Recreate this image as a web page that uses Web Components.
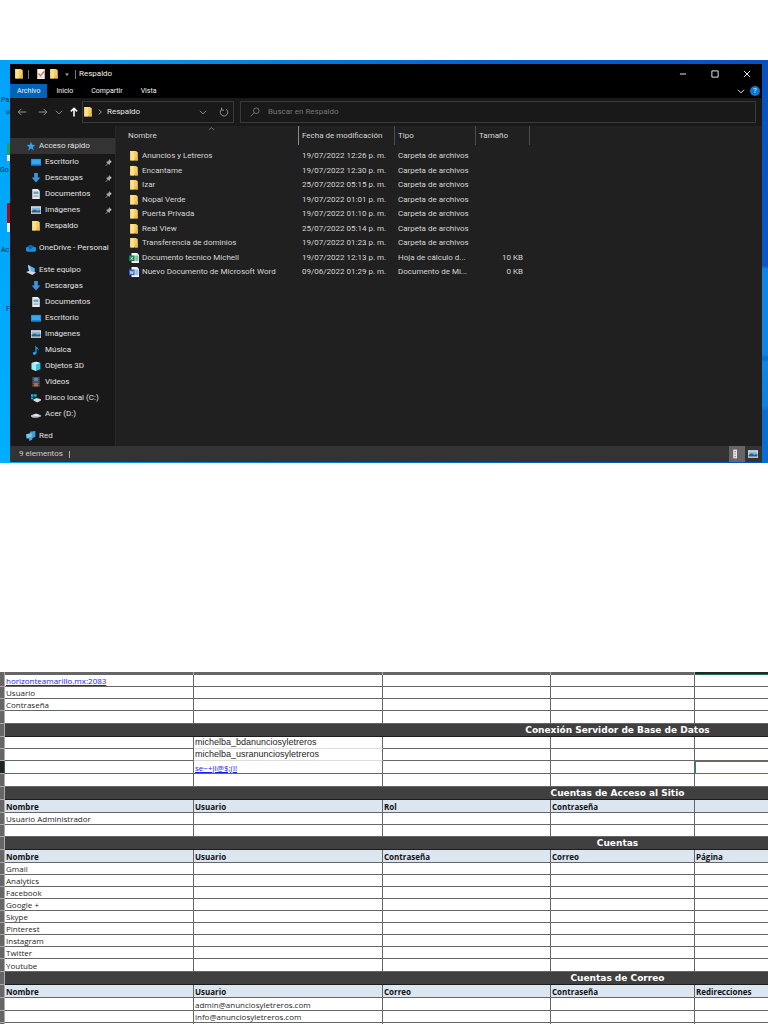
<!DOCTYPE html>
<html lang="es">
<head>
<meta charset="utf-8">
<title>Respaldo</title>
<style>
  html { height: 100%; }
  body { margin: 0; height: 100%; background: #fff; display: flex; flex-direction: column; overflow: hidden;
    font-family: Roboto, "Open Sans", sans-serif; font-size: 8px; line-height: 16px; }
  desk-scene { margin-top: 60px; }
  work-sheet { margin-top: 209px; }
</style>
</head>
<body>
<desk-scene>
  <file-explorer></file-explorer>
</desk-scene>
<work-sheet></work-sheet>

<script>
const ICONS = {
  folder: '<path d="M2 0h9l3 2v13H2z" fill="#f6cf63"/><path d="M2 0h6v15H2z" fill="#ffe08a"/><path d="M10 10h4v5h-4z" fill="#e9b84a"/>',
  check: '<path d="M2 0h12v16H2z" fill="#f4f4f4"/><path d="M4 7l3 4 6-7" fill="none" stroke="#e0653a" stroke-width="2"/><path d="M4 13h8" stroke="#aab" />',
  star: '<path d="M8 1l2 5 5 .5-4 3.300 1.500 5.200L8 12l-4.500 3L5 9.800 1 6.500 6 6z" fill="#2ea1f2"/>',
  desktop: '<path d="M0 3h16v11H0z" fill="#1187dd"/><path d="M1 4h14v8l-3-1H1z" fill="#35a9f5"/>',
  down: '<path d="M5 0h6v7h4l-7 8-7-8h4z" fill="#3b93e0"/>',
  doc: '<path d="M2 0h9l3 3v13H2z" fill="#e8edf2"/><path d="M4 4h8v4H4z" fill="#6f9fc4"/><path d="M4 10h8M4 12h8" stroke="#7f94a8"/>',
  image: '<path d="M0 2h16v12H0z" fill="#e9f1f7"/><path d="M1 4h14v8H1z" fill="#7fb4dd"/><path d="M1 12V9l5-2 4 2 5-1v4z" fill="#2f5f73"/>',
  cloud: '<path d="M4 14a4 4 0 0 1-1-8 5.500 5.500 0 0 1 9 0 4 4 0 0 1 1 8z" fill="#1490df"/><path d="M3 6a5.500 5.500 0 0 1 9 0L6 11z" fill="#0a64b5"/>',
  pc: '<path d="M3 0l11 5v7L5 9z" fill="#56b4e8"/><path d="M3 0l3 1 2 9-3-1z" fill="#9fd6f5"/><path d="M0 11l6-2 10 3-6 4z" fill="#d5dde3"/>',
  music: '<path d="M7 0c1 4 6 4 5 9-1-3-3-3-3-3v6c0 5-7 5-6 1 .3-2 3-2.500 4-2z" fill="#1e9bf0"/>',
  cube: '<path d="M1 3l7-2 7 2v10l-7 3-7-3z" fill="#35c3e6"/><path d="M1 3l7 2v11l-7-3z" fill="#a6ecf7"/><path d="M1 3l7-2 7 2-7 2z" fill="#d8f8fc"/>',
  video: '<path d="M2 0h12v16H2z" fill="#3a3d44"/><path d="M5 1h6v6H5z" fill="#5a86c9"/><path d="M5 9h6v6H5z" fill="#b0714e"/><path d="M3.500 1v14M12.500 1v14" stroke="#c8c8c8" stroke-dasharray="1 2"/>',
  diskc: '<path d="M0 2h4v4H0zM5 2h4v4H5zM0 7h4v3H0z" fill="#1eb2ee"/><path d="M4 10l5-2 7 2v2l-6 3-6-3z" fill="#d5dade"/>',
  disk: '<path d="M0 10l8-3 8 3v2l-6 2H3l-3-2z" fill="#b9bcc0"/><path d="M2 10l6-2 6 2-5 1z" fill="#f4f4f4"/>',
  network: '<path d="M6 1l9-1v9l-6 3z" fill="#3f9fdd"/><path d="M0 5l9-2v8l-8 1z" fill="#7cc4ee"/><path d="M5 10l5-1v5l-5 2z" fill="#4fa3d8"/>',
  excel: '<path d="M4 0h9l3 3v13H4z" fill="#f1f4f2"/><path d="M10 4h5v9h-5z" fill="#7cc09a"/><path d="M0 4h9v9H0z" fill="#15814a"/><path d="M2.500 6l4 5M6.500 6l-4 5" stroke="#fff"/>',
  word: '<path d="M4 0h9l3 3v13H4z" fill="#f1f4fa"/><path d="M10 4h5v9h-5z" fill="#9cb9e8"/><path d="M0 4h9v9H0z" fill="#2b62c4"/><path d="M2 6l1 5 1.500-4L6 11l1-5" fill="none" stroke="#fff"/>',
  pin: '<path d="M9 0l7 7-2 .5-3 2.500-.5 4-3.500-3L2 16l-1-1 5-5-4-4 5-.5L9 3z" fill="#a5b1bb"/>',
  back: '<path d="M15 8H2M7 3L2 8l5 5" class="s"/>',
  forward: '<path d="M1 8h13M9 3l5 5-5 5" class="s"/>',
  up: '<path d="M8 15V2M3 7l5-5 5 5" class="s bold"/>',
  chevron: '<path d="M3 6l5 5 5-5" class="s"/>',
  caret: '<path d="M2 11l6-5 6 5" class="s"/>',
  right: '<path d="M6 4l4 4-4 4" class="s"/>',
  small: '<path d="M5 7h6l-3 4z" fill="currentColor"/>',
  refresh: '<path d="M11.500 3.500A6 6 0 1 1 4 4M4 1v4h4" class="s"/>',
  search: '<circle cx="10" cy="6" r="4.500" class="s"/><path d="M7 9l-6 6" class="s"/>',
  min: '<path d="M3 8h10" class="s"/>',
  max: '<path d="M3 3h10v10H3z" class="s"/>',
  close: '<path d="M3 3l10 10M13 3L3 13" class="s"/>',
  details: '<path d="M2 1h6v14H2z" fill="#e8e8e8"/><path d="M4 3h2v2H4zM4 11h2v2H4z" fill="#b5655a"/><path d="M4 7h2v2H4z" fill="#7a8a94"/>'
};

class UiIcon extends HTMLElement {
  connectedCallback() {
    const root = this.attachShadow({ mode: 'open' });
    root.innerHTML = `<style>
      :host { display: block; width: 10px; height: 10px; flex: none; }
      svg { display: block; width: 100%; height: 100%; }
      .s { fill: none; stroke: currentColor; stroke-width: 1.5px; }
      .bold { stroke-width: 2.5px; }
    </style><svg viewBox="0 0 16 16" aria-hidden="true">${ICONS[this.getAttribute('name')]}</svg>`;
  }
}
customElements.define('ui-icon', UiIcon);

class DeskScene extends HTMLElement {
  constructor() {
    super();
    this.attachShadow({ mode: 'open' }).innerHTML = `<style>
      :host { display: grid; position: relative; padding: 4px 6px 1px 10px; overflow: hidden;
        background:
          linear-gradient(#0850bd, #0a58c6 51%, #0e84e6 52%, #0e84e6 73%, #0a6cd2 74%, #0e86e2 75%, #0c80dc 86%, #0a6ed0 87%) right / 6px 100% no-repeat,
          linear-gradient(90deg, #00a8fb, #0a8ae0 25%, #0066cc 60%, #0850bd); }
      .shortcuts { position: absolute; left: 0; top: 0; width: 10px; height: 100%;
        background: linear-gradient(#00a3f8, #00aeff); color: #042d48; font-size: 7px; line-height: 12px; }
      .shortcuts span, .shortcuts i { position: absolute; }
      .shortcuts i { right: 0; width: 3px; }
    </style>
    <div class="shortcuts">
      <span style="left:1px;top:34px">Pa</span><span style="left:6px;top:46px">u</span>
      <i style="top:83px;height:12px;background:#2b9d52"></i><i style="top:95px;height:6px;background:#e6eef2"></i>
      <span style="left:0;top:104px">Go</span>
      <i style="top:143px;height:20px;background:#a80c14"></i><i style="top:163px;height:9px;background:#e6eef2"></i>
      <span style="left:1px;top:184px">Ac</span><span style="left:6px;top:243px">F</span>
    </div>
    <slot></slot>`;
  }
}
customElements.define('desk-scene', DeskScene);

class NavItem extends HTMLElement {
  connectedCallback() {
    const pin = this.hasAttribute('pinned') ? '<ui-icon name="pin"></ui-icon>' : '';
    this.attachShadow({ mode: 'open' }).innerHTML = `<style>
      :host { display: block; }
      a { display: flex; align-items: center; gap: 3px; height: 16px; padding: 0 3px 0 16px; color: #e2e2e2; text-decoration: none; white-space: nowrap; }
      :host([sub]) a { padding-left: 21px; gap: 4px; }
      :host([current]) a { background: #333; }
      span { flex: 1; }
      ui-icon[name=pin] { width: 7px; height: 7px; }
    </style><a href="#"><ui-icon name="${this.getAttribute('icon')}"></ui-icon><span><slot></slot></span>${pin}</a>`;
  }
}
customElements.define('nav-item', NavItem);

class TitleBar extends HTMLElement {
  constructor() {
    super();
    this.attachShadow({ mode: 'open' }).innerHTML = `<style>
      :host { display: block; background: #000; color: #f2f2f2; }
      button { border: 0; background: none; color: inherit; font: inherit; padding: 0; margin: 0; }
      .row { display: flex; align-items: center; }
      .title { height: 20px; padding-left: 4px; }
      .sep { width: 1px; height: 9px; background: #777; }
      .quick { display: flex; align-items: center; flex: 1; gap: 3px; }
      .quick .sep { margin: 0 4px 0 1px; }
      .quick ui-icon[name=small] { color: #aaa; }
      .quick .last { margin: 0; }
      .ctl { width: 32px; height: 20px; display: grid; place-items: center; }
      .ctl:last-child { width: 31px; }
      .tabs { height: 14px; font-size: 7px; line-height: 14px; }
      .tabs button { padding: 0 9px; height: 14px; }
      .tabs .file { background: #0063b8; padding: 0 7px; }
      .fill { flex: 1; }
      .tabs .tool { padding: 0 4px 0 0; }
      .tabs .help { width: 10px; height: 10px; border-radius: 50%; background: #0a78d4; padding: 0; margin-right: 2px; line-height: 10px; font-size: 8px; }
    </style>
    <div class="row title">
      <div class="quick"><ui-icon name="folder"></ui-icon><div class="sep"></div><ui-icon name="check"></ui-icon><ui-icon name="folder"></ui-icon><ui-icon name="small"></ui-icon><div class="sep last"></div><span>Respaldo</span></div>
      <button class="ctl" aria-label="Minimizar"><ui-icon name="min"></ui-icon></button>
      <button class="ctl" aria-label="Maximizar"><ui-icon name="max"></ui-icon></button>
      <button class="ctl" aria-label="Cerrar"><ui-icon name="close"></ui-icon></button>
    </div>
    <div class="row tabs">
      <button class="file">Archivo</button><button>Inicio</button><button>Compartir</button><button>Vista</button>
      <div class="fill"></div>
      <button class="tool" aria-label="Expandir cinta"><ui-icon name="chevron"></ui-icon></button>
      <button class="help">?</button>
    </div>`;
  }
}
customElements.define('title-bar', TitleBar);

class AddressBar extends HTMLElement {
  constructor() {
    super();
    this.attachShadow({ mode: 'open' }).innerHTML = `<style>
      :host { display: flex; align-items: center; height: 28px; background: #191919; color: #e6e6e6; padding: 0 6px 0 7px; box-sizing: border-box; }
      button { border: 0; background: none; color: #999; padding: 0; margin: 0; }
      .nav { display: flex; align-items: center; gap: 11px; width: 65px; box-sizing: border-box; }
      .nav button:nth-child(3) { margin: 0 -6px 0 -5px; }
      .nav button:nth-child(4) { color: #fff; }
      .box { box-sizing: border-box; height: 22px; border: 1px solid #3a3a3a; display: flex; align-items: center; }
      .path { width: 152px; padding: 0 4px 0 0; gap: 2px; }
      .path span { flex: 1; }
      .path button { margin-left: 9px; }
      .path ui-icon[name=right] { color: #aaa; }
      .search { flex: 1; margin-left: 6px; padding-left: 9px; gap: 8px; color: #777; }
      input { flex: 1; min-width: 0; border: 0; padding: 0; background: none; font: inherit; color: inherit; outline: 0; }
      input::placeholder { color: #777; opacity: 1; }
    </style>
    <div class="nav">
      <button aria-label="Atrás"><ui-icon name="back"></ui-icon></button>
      <button aria-label="Adelante"><ui-icon name="forward"></ui-icon></button>
      <button aria-label="Recientes"><ui-icon name="chevron"></ui-icon></button>
      <button aria-label="Subir"><ui-icon name="up"></ui-icon></button>
    </div>
    <div class="box path"><ui-icon name="folder"></ui-icon><ui-icon name="right"></ui-icon><span>Respaldo</span>
      <button aria-label="Historial"><ui-icon name="chevron"></ui-icon></button>
      <button aria-label="Actualizar"><ui-icon name="refresh"></ui-icon></button></div>
    <label class="box search"><ui-icon name="search"></ui-icon><input type="text" aria-label="Buscar en Respaldo" placeholder="Buscar en Respaldo"></label>`;
  }
}
customElements.define('address-bar', AddressBar);

const FILES = [
  ['folder', 'Anuncios y Letreros', '19/07/2022 12:26 p. m.', 'Carpeta de archivos', ''],
  ['folder', 'Encantame', '19/07/2022 12:30 p. m.', 'Carpeta de archivos', ''],
  ['folder', 'Izar', '25/07/2022 05:15 p. m.', 'Carpeta de archivos', ''],
  ['folder', 'Nopal Verde', '19/07/2022 01:01 p. m.', 'Carpeta de archivos', ''],
  ['folder', 'Puerta Privada', '19/07/2022 01:10 p. m.', 'Carpeta de archivos', ''],
  ['folder', 'Real View', '25/07/2022 05:14 p. m.', 'Carpeta de archivos', ''],
  ['folder', 'Transferencia de dominios', '19/07/2022 01:23 p. m.', 'Carpeta de archivos', ''],
  ['excel', 'Documento tecnico Michell', '19/07/2022 12:13 p. m.', 'Hoja de cálculo d...', '10 KB'],
  ['word', 'Nuevo Documento de Microsoft Word', '09/06/2022 01:29 p. m.', 'Documento de Mi...', '0 KB']
];

class FileList extends HTMLElement {
  constructor() {
    super();
    this.attachShadow({ mode: 'open' }).innerHTML = `<style>
      :host { display: block; background: #202020; color: #d6d6d6; border-left: 1px solid #292929; position: relative; }
      table { border-collapse: separate; border-spacing: 0; table-layout: fixed; width: 100%; }
      th { height: 19px; padding: 0 0 0 3px; text-align: left; font-weight: normal; border-right: 1px solid #4c4c4c; line-height: 16px; }
      th:first-child { padding-left: 12px; border-color: #8a8a8a; }
      th:last-child { border: 0; }
      thead::after { content: ""; display: block; height: 4px; }
      td { height: 14px; padding: 0 0 0 3px; line-height: 14px; white-space: nowrap; }
      td:first-child { padding: 0; }
      tr:nth-child(even) td { height: 15px; }
      td:nth-child(4) { text-align: right; padding-right: 7px; }
      .name { display: flex; align-items: center; gap: 3px; padding-left: 13px; }
      .sort { position: absolute; left: 92px; top: -1px; width: 7px; height: 7px; color: #999; }
    </style>
    <ui-icon class="sort" name="caret"></ui-icon>
    <table>
      <colgroup><col style="width:183px"><col style="width:96px"><col style="width:81px"><col style="width:54px"><col></colgroup>
      <thead><tr><th>Nombre</th><th>Fecha de modificación</th><th>Tipo</th><th>Tamaño</th><th></th></tr></thead>
      <tbody>${FILES.map(([i, n, d, t, s]) => `<tr><td><div class="name"><ui-icon name="${i}"></ui-icon>${n}</div></td><td>${d}</td><td>${t}</td><td>${s}</td><td></td></tr>`).join('')}</tbody>
    </table>`;
  }
}
customElements.define('file-list', FileList);

class FileExplorer extends HTMLElement {
  constructor() {
    super();
    this.attachShadow({ mode: 'open' }).innerHTML = `<style>
      :host { display: block; position: relative; min-width: 0; }
      .body { display: grid; grid-template-columns: 105px 1fr; }
      nav { background: #191919; padding: 12px 0 2px; display: flex; flex-direction: column; gap: 6px; }
      footer { display: flex; align-items: center; height: 16px; background: #333; color: #ccc; padding: 0 1px 0 9px; }
      footer .sep { width: 1px; height: 7px; background: #aaa; margin-left: 6px; }
      .fill { flex: 1; }
      button { border: 0; padding: 0; margin: 0; width: 16px; height: 16px; background: none; display: grid; place-items: center; }
      .on { background: #666; }
    </style>
    <title-bar></title-bar>
    <address-bar></address-bar>
    <div class="body">
      <nav>
        <div>
          <nav-item icon="star" current>Acceso rápido</nav-item>
          <nav-item sub icon="desktop" pinned>Escritorio</nav-item>
          <nav-item sub icon="down" pinned>Descargas</nav-item>
          <nav-item sub icon="doc" pinned>Documentos</nav-item>
          <nav-item sub icon="image" pinned>Imágenes</nav-item>
          <nav-item sub icon="folder">Respaldo</nav-item>
        </div>
        <nav-item icon="cloud">OneDrive - Personal</nav-item>
        <div>
          <nav-item icon="pc">Este equipo</nav-item>
          <nav-item sub icon="down">Descargas</nav-item>
          <nav-item sub icon="doc">Documentos</nav-item>
          <nav-item sub icon="desktop">Escritorio</nav-item>
          <nav-item sub icon="image">Imágenes</nav-item>
          <nav-item sub icon="music">Música</nav-item>
          <nav-item sub icon="cube">Objetos 3D</nav-item>
          <nav-item sub icon="video">Videos</nav-item>
          <nav-item sub icon="diskc">Disco local (C:)</nav-item>
          <nav-item sub icon="disk">Acer (D:)</nav-item>
        </div>
        <nav-item icon="network">Red</nav-item>
      </nav>
      <file-list></file-list>
    </div>
    <footer><span>9 elementos</span><div class="sep"></div><div class="fill"></div>
      <button class="on" aria-label="Detalles"><ui-icon name="details"></ui-icon></button>
      <button aria-label="Iconos grandes"><ui-icon name="image"></ui-icon></button></footer>`;
  }
}
customElements.define('file-explorer', FileExplorer);

const row = (cells, cls = '') => `<tr class="${cls}"><td class="gut"></td>${[0, 1, 2, 3, 4].map(i => `<td>${cells[i] || ''}</td>`).join('')}</tr>`;
const head = cells => `<tr class="head tall"><td class="gut"></td>${[0, 1, 2, 3, 4].map(i => `<th>${cells[i] || ''}</th>`).join('')}</tr>`;
const band = text => `<tr class="band tall"><td class="gut"></td><th colspan="5">${text}</th></tr>`;

class WorkSheet extends HTMLElement {
  constructor() {
    super();
    this.attachShadow({ mode: 'open' }).innerHTML = `<style>
      :host { display: block; flex: 1; min-height: 0; overflow: hidden; font-family: "Open Sans", "Noto Sans", sans-serif; color: #262626; line-height: 11px; }
      table { border-collapse: separate; border-spacing: 0; table-layout: fixed; width: 1230px; }
      td, th { box-sizing: border-box; height: 12px; padding: 0 0 0 1px; text-align: left; white-space: nowrap;
        border: 0 solid #666; border-width: 0 1px 1px 0; }
      .tall > * { height: 13px; }
      .axis > * { height: 3px; background: #666; border-width: 0 1px 0 0; border-color: #aaa; padding: 0; }
      .axis > :last-child { background: #1f2a24; box-shadow: inset 0 -1px #217346; }
      tr > .gut { background: #666; border-color: #aaa; padding: 0; }
      .head th { background: #dce6f1; color: #111; font-weight: bold; }
      .band th { background: #404040; color: #fff; text-align: center; border-color: #1c1c1c; font: bold 9px/12px "DejaVu Sans", sans-serif; }
      .arial td:nth-child(3) { font: 9px/11px "Liberation Sans", Arial, sans-serif; border-bottom-color: #ddd; }
      .active .gut { background: #222; border-right-color: #217346; }
      .active td:last-child { border-bottom-color: #2e8b57; box-shadow: inset 1px 1px #2e8b57; }
      a { color: #1a1aff; }
    </style>
    <table>
      <colgroup><col style="width:5px"><col style="width:189px"><col style="width:189px"><col style="width:168px"><col style="width:144px"><col></colgroup>
      <tr class="axis"><td></td><td></td><td></td><td></td><td></td><td></td></tr>
      ${row(['<a href="#">horizonteamarillo.mx:2083</a>'])}${row(['Usuario'])}${row(['Contraseña'])}${row([], 'tall')}
      ${band('Conexión Servidor de Base de Datos')}
      ${row(['', 'michelba_bdanunciosyletreros'], 'arial')}${row(['', 'michelba_usranunciosyletreros'], 'arial')}
      ${row(['', '<a href="#">se~+jI@$;(i!</a>'], 'active tall')}${row([], 'tall')}
      ${band('Cuentas de Acceso al Sitio')}
      ${head(['Nombre', 'Usuario', 'Rol', 'Contraseña'])}
      ${row(['Usuario Administrador'])}${row([])}
      ${band('Cuentas')}
      ${head(['Nombre', 'Usuario', 'Contraseña', 'Correo', 'Página'])}
      ${['Gmail', 'Analytics', 'Facebook', 'Google +', 'Skype', 'Pinterest', 'Instagram', 'Twitter'].map(n => row([n])).join('')}${row(['Youtube'], 'tall')}
      ${band('Cuentas de Correo')}
      ${head(['Nombre', 'Usuario', 'Correo', 'Contraseña', 'Redirecciones'])}
      ${row(['', 'admin@anunciosyletreros.com'], 'tall')}${row(['', 'info@anunciosyletreros.com'])}${row([])}
    </table>`;
  }
}
customElements.define('work-sheet', WorkSheet);
</script>
</body>
</html>
